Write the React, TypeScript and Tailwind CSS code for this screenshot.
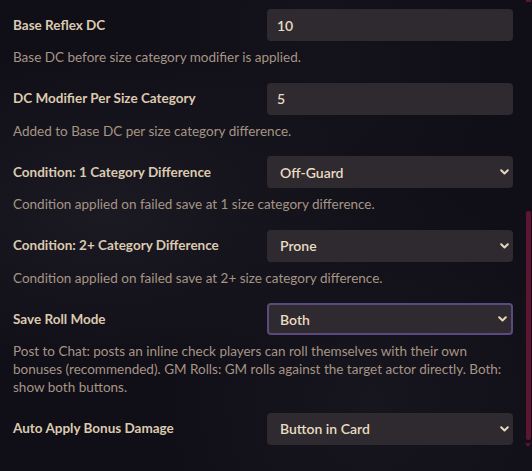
import React from "react";

const Chevron = () => (
  <svg width="9" height="6" viewBox="0 0 9 6" className="absolute right-[4px] top-1/2 -translate-y-1/2" fill="none">
    <path d="M1.2 1.2 L4.5 4.5 L7.8 1.2" stroke="#e6d8bd" strokeWidth="2" strokeLinecap="round" strokeLinejoin="round" />
  </svg>
);

type Row = {
  label: string;
  kind: "input" | "select";
  value: string;
  hint: string[];
  focus?: boolean;
};

const rows: Row[] = [
  { label: "Base Reflex DC", kind: "input", value: "10", hint: ["Base DC before size category modifier is applied."] },
  { label: "DC Modifier Per Size Category", kind: "input", value: "5", hint: ["Added to Base DC per size category difference."] },
  { label: "Condition: 1 Category Difference", kind: "select", value: "Off-Guard", hint: ["Condition applied on failed save at 1 size category difference."] },
  { label: "Condition: 2+ Category Difference", kind: "select", value: "Prone", hint: ["Condition applied on failed save at 2+ size category difference."] },
  {
    label: "Save Roll Mode",
    kind: "select",
    value: "Both",
    focus: true,
    hint: [
      "Post to Chat: posts an inline check players can roll themselves with their own",
      "bonuses (recommended). GM Rolls: GM rolls against the target actor directly. Both:",
      "show both buttons.",
    ],
  },
  { label: "Auto Apply Bonus Damage", kind: "select", value: "Button in Card", hint: [] },
];

export default function App() {
  return (
    <div
      className="relative w-[532px] h-[471px] overflow-hidden bg-[#100e17]"
      style={{ fontFamily: "Lato, 'Noto Sans', sans-serif" }}
    >
      <div className="absolute inset-0 bg-[radial-gradient(ellipse_at_20%_45%,#1b1922_0%,transparent_45%),radial-gradient(ellipse_at_70%_85%,#17151e_0%,transparent_40%),radial-gradient(ellipse_at_60%_10%,#14121b_0%,transparent_40%)]" />
      <div className="relative flex flex-col pl-[13px] pr-[19px] pt-[9px]">
        {rows.map((r) => (
          <div key={r.label} className="flex flex-col mb-[16.5px]">
            <div className="flex items-center h-8">
              <div className="w-[254px] text-[13.5px] font-bold text-[#dccab0]">{r.label}</div>
              <div
                className={
                  "relative w-[246px] h-8 rounded-[4px] bg-[#2f2930] flex items-center text-[14px] font-semibold text-[#e8dcc2] " +
                  (r.focus ? "border-2 border-[#5b4a80] pl-[11px]" : r.kind === "select" ? "pl-[13px]" : "pl-[10px]")
                }
              >
                {r.value}
                {r.kind === "select" && <Chevron />}
              </div>
            </div>
            {r.hint.length > 0 && (
              <div className="mt-[7px] text-[13.5px] leading-[18px] text-[#a69585]">
                {r.hint.map((h) => (
                  <div key={h} className="whitespace-nowrap">{h}</div>
                ))}
              </div>
            )}
          </div>
        ))}
      </div>
      <div className="absolute right-[1px] top-[211px] w-[5px] h-[229px] rounded-[2px] bg-[#5e1530]" />
      <div className="absolute right-[1px] top-0 w-[5px] h-[2px] bg-[#5e1530]" />
      <div className="absolute right-[1px] top-[443px] w-0 h-0 border-l-[3px] border-r-[3px] border-t-[4px] border-l-transparent border-r-transparent border-t-[#5e1530]" />
    </div>
  );
}
